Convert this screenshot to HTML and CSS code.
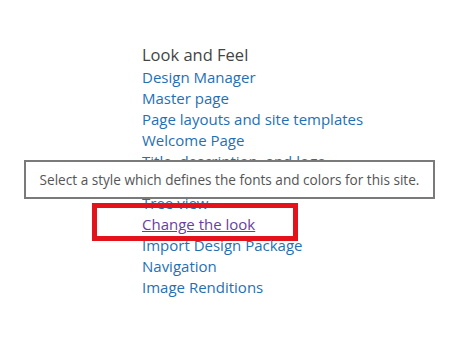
FILE: index.html
```html
<!DOCTYPE html>
<html lang="en">
<head>
    <meta charset="UTF-8">
    <title>Site Settings - Look and Feel</title>
    <link rel="stylesheet" href="styles.css">
</head>
<body>
    <div class="page">
        <div class="section">
            <h2 class="section-title">Look and Feel</h2>
            <ul class="links">
                <li><a href="#">Design Manager</a></li>
                <li><a href="#">Master page</a></li>
                <li><a href="#">Page layouts and site templates</a></li>
                <li><a href="#">Welcome Page</a></li>
                <li><a href="#">Title, description, and logo</a></li>
                <li><a href="#">Device Channels</a></li>
                <li><a href="#">Tree view</a></li>
                <li class="highlight"><a href="#" class="visited">Change the look</a></li>
                <li><a href="#">Import Design Package</a></li>
                <li><a href="#">Navigation</a></li>
                <li><a href="#">Image Renditions</a></li>
            </ul>
        </div>
        <div class="tooltip">Select a style which defines the fonts and colors for this site.</div>
    </div>
</body>
</html>
```

FILE: styles.css
```css
* {
    margin: 0;
    padding: 0;
    box-sizing: border-box;
}

body {
    background: #fff;
    font-family: 'Open Sans', 'Noto Sans', sans-serif;
}

.page {
    position: relative;
    width: 450px;
    height: 337px;
    overflow: hidden;
}

.section {
    padding: 43px 0 0 142px;
}

.section-title {
    font-size: 16.5px;
    font-weight: normal;
    color: #444;
    line-height: 24px;
}

.links {
    list-style: none;
}

.links li {
    position: relative;
    font-size: 15px;
    line-height: 21px;
}

.links a {
    color: #1f70b5;
    text-decoration: none;
}

.links a.visited {
    color: #6b3e9e;
    text-decoration: underline;
}

/* red annotation box around the current item */
.highlight::before {
    content: "";
    position: absolute;
    left: -50px;
    top: -11px;
    width: 206px;
    height: 38px;
    box-sizing: border-box;
    border: 5px solid #e3121b;
}

.tooltip {
    position: absolute;
    left: 24px;
    top: 160px;
    width: 411px;
    height: 39px;
    border: 2px solid #7a7a7a;
    background: #fff;
    color: #555;
    font-size: 13.6px;
    line-height: 35px;
    text-align: center;
}
```
